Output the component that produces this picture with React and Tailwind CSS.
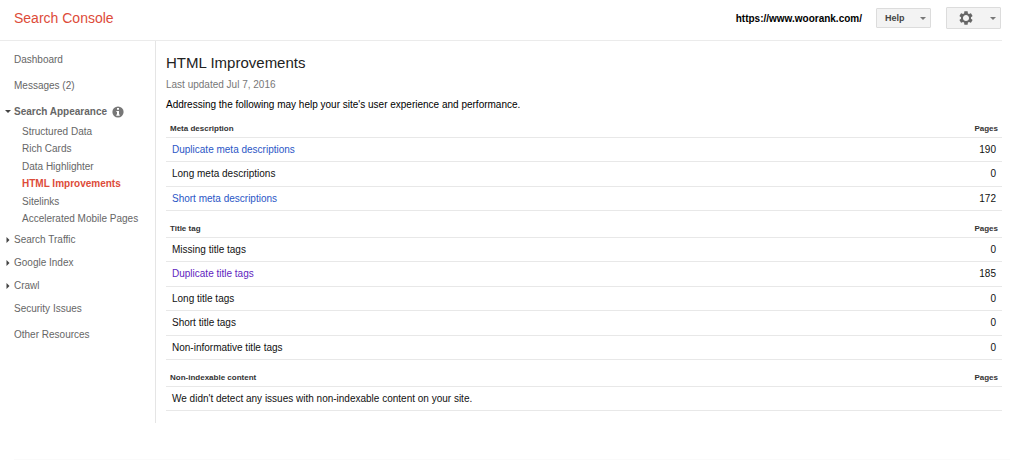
import { useState } from 'react';

const appearanceLinks = [
  'Structured Data',
  'Rich Cards',
  'Data Highlighter',
  'HTML Improvements',
  'Sitelinks',
  'Accelerated Mobile Pages',
];

const sections = [
  {
    title: 'Meta description',
    rows: [
      { label: 'Duplicate meta descriptions', pages: 190, link: 'text-[#2a56c6]' },
      { label: 'Long meta descriptions', pages: 0 },
      { label: 'Short meta descriptions', pages: 172, link: 'text-[#2a56c6]' },
    ],
  },
  {
    title: 'Title tag',
    rows: [
      { label: 'Missing title tags', pages: 0 },
      { label: 'Duplicate title tags', pages: 185, link: 'text-[#6124c0]' },
      { label: 'Long title tags', pages: 0 },
      { label: 'Short title tags', pages: 0 },
      { label: 'Non-informative title tags', pages: 0 },
    ],
  },
  {
    title: 'Non-indexable content',
    rows: [],
    empty: "We didn't detect any issues with non-indexable content on your site.",
  },
];

function DownArrow({ className }) {
  return (
    <svg viewBox="0 0 6 3" className={className} fill="currentColor" aria-hidden="true">
      <path d="M0 0h6L3 3z" />
    </svg>
  );
}

function RightArrow() {
  return (
    <svg viewBox="0 0 4 6" className="h-1.5 w-1 text-[#444]" fill="currentColor" aria-hidden="true">
      <path d="M.5 0l3 3-3 3z" />
    </svg>
  );
}

function GearIcon() {
  return (
    <svg viewBox="0 0 24 24" className="h-4 w-4" fill="currentColor" aria-hidden="true">
      <path d="M19.43 12.98c.04-.32.07-.64.07-.98s-.03-.66-.07-.98l2.11-1.65c.19-.15.24-.42.12-.64l-2-3.46c-.12-.22-.39-.3-.61-.22l-2.49 1c-.52-.4-1.08-.73-1.69-.98l-.38-2.65C14.46 2.18 14.25 2 14 2h-4c-.25 0-.46.18-.49.42l-.38 2.65c-.61.25-1.17.59-1.69.98l-2.49-1c-.23-.09-.49 0-.61.22l-2 3.46c-.13.22-.07.49.12.64l2.11 1.65c-.04.32-.07.65-.07.98s.03.66.07.98l-2.11 1.65c-.19.15-.24.42-.12.64l2 3.46c.12.22.39.3.61.22l2.49-1c.52.4 1.08.73 1.69.98l.38 2.65c.03.24.24.42.49.42h4c.25 0 .46-.18.49-.42l.38-2.65c.61-.25 1.17-.59 1.69-.98l2.49 1c.23.09.49 0 .61-.22l2-3.46c.12-.22.07-.49-.12-.64l-2.11-1.65zM12 16.6c-2.54 0-4.6-2.06-4.6-4.6s2.06-4.6 4.6-4.6 4.6 2.06 4.6 4.6-2.06 4.6-4.6 4.6z" />
    </svg>
  );
}

function InfoIcon() {
  return (
    <svg viewBox="0 0 12 12" className="h-3 w-3" aria-hidden="true">
      <circle cx="6" cy="6" r="5.6" fill="#777" />
      <path d="M5 2h2v1.8H5zM4.4 4.9H7v3.6h.7v1.2H4.3V8.5H5V6.1h-.6z" fill="#fff" />
    </svg>
  );
}

function SideLink({ children }) {
  return (
    <li className="flex h-6 items-center pl-3.5">
      <a href="#">{children}</a>
    </li>
  );
}

function SideGroup({ label }) {
  return (
    <li>
      <button type="button" className="flex h-[23px] items-center gap-1 pl-1.5">
        <RightArrow />
        {label}
      </button>
    </li>
  );
}

function Sidebar() {
  const [open, setOpen] = useState(true);

  return (
    <nav className="w-[156px] shrink-0 border-r border-[#e5e5e5] pt-[7px] pb-[76px] text-[#666]">
      <ul className="flex flex-col gap-0.5">
        <SideLink>Dashboard</SideLink>
        <SideLink>Messages (2)</SideLink>
        <li>
          <div className="flex h-[23px] items-center gap-[5px] pl-[5px]">
            <button
              type="button"
              aria-expanded={open}
              onClick={() => setOpen(!open)}
              className="flex items-center gap-[3px] font-bold"
            >
              <DownArrow className="h-[3px] w-1.5 text-[#444]" />
              Search Appearance
            </button>
            <button type="button" aria-label="About search appearance">
              <InfoIcon />
            </button>
          </div>
          {open ? (
            <ul>
              {appearanceLinks.map((label) => (
                <li key={label} className="flex h-[17px] items-center pl-[22px] even:h-[18px]">
                  <a
                    href="#"
                    className={label === 'HTML Improvements' ? 'font-bold text-[#dd4b39]' : ''}
                  >
                    {label}
                  </a>
                </li>
              ))}
            </ul>
          ) : null}
          <ul>
            <SideGroup label="Search Traffic" />
            <SideGroup label="Google Index" />
            <SideGroup label="Crawl" />
          </ul>
        </li>
      </ul>
      <ul className="flex flex-col gap-0.5">
        <SideLink>Security Issues</SideLink>
        <SideLink>Other Resources</SideLink>
      </ul>
    </nav>
  );
}

function IssueTable({ section }) {
  return (
    <table className="w-full border-separate border-spacing-0">
      <thead>
        <tr className="h-[27px] text-[8px] leading-[10px] text-[#333]">
          <th className="border-b border-[#e8e8e8] pb-[3px] pl-1 text-left align-bottom">
            {section.title}
          </th>
          <th className="w-20 border-b border-[#e8e8e8] pr-1 pb-[3px] text-right align-bottom">
            Pages
          </th>
        </tr>
      </thead>
      <tbody>
        {section.rows.map((row) => (
          <tr key={row.label} className="h-6 even:h-[25px]">
            <td className="border-b border-[#e8e8e8] pl-1.5">
              {row.link ? (
                <a href="#" className={row.link}>
                  {row.label}
                </a>
              ) : (
                row.label
              )}
            </td>
            <td className="border-b border-[#e8e8e8] pr-1.5 text-right">{row.pages}</td>
          </tr>
        ))}
        {section.empty ? (
          <tr className="h-6">
            <td colSpan={2} className="border-b border-[#e8e8e8] pl-1.5">
              {section.empty}
            </td>
          </tr>
        ) : null}
      </tbody>
    </table>
  );
}

export default function App() {
  return (
    <div className="bg-white font-['Liberation_Sans',Arial,sans-serif] text-[10px] leading-3 text-[#111]">
      <header className="mr-[22px] flex h-[41px] items-start justify-between border-b border-[#ebebeb] pl-3.5">
        <div className="pt-2.5 text-[14px] leading-4 text-[#dd4b39]">Search Console</div>
        <div className="flex items-start">
          <div className="mr-3.5 pt-[13px] font-bold text-black">https://www.woorank.com/</div>
          <button
            type="button"
            className="mt-2 mr-[15px] flex h-5 w-[55px] items-center justify-between rounded-[1px] border border-[#dcdcdc] bg-[#f3f3f3] pr-1 pl-2 text-[9px] font-bold text-[#444]"
          >
            Help
            <DownArrow className="h-[3px] w-1.5 text-[#777]" />
          </button>
          <button
            type="button"
            aria-label="Settings"
            className="mt-[7px] mr-px flex h-[22px] w-[55px] items-center justify-between rounded-[1px] border border-[#dcdcdc] bg-[#f3f3f3] pr-1 pl-[11px] text-[#666]"
          >
            <GearIcon />
            <DownArrow className="h-[3px] w-1.5 text-[#777]" />
          </button>
        </div>
      </header>

      <div className="flex items-start">
        <Sidebar />
        <main className="mr-[22px] ml-2.5 flex-1">
          <h1 className="pt-3 text-[15px] leading-5 text-[#222]">HTML Improvements</h1>
          <p className="pt-1.5 text-[#777]">Last updated Jul 7, 2016</p>
          <p className="pt-2 text-black">
            Addressing the following may help your site's user experience and performance.
          </p>
          {sections.map((section) => (
            <IssueTable key={section.title} section={section} />
          ))}
        </main>
      </div>

      <footer className="mx-3.5 mt-9 border-t border-[#fafafa]" />
    </div>
  );
}
